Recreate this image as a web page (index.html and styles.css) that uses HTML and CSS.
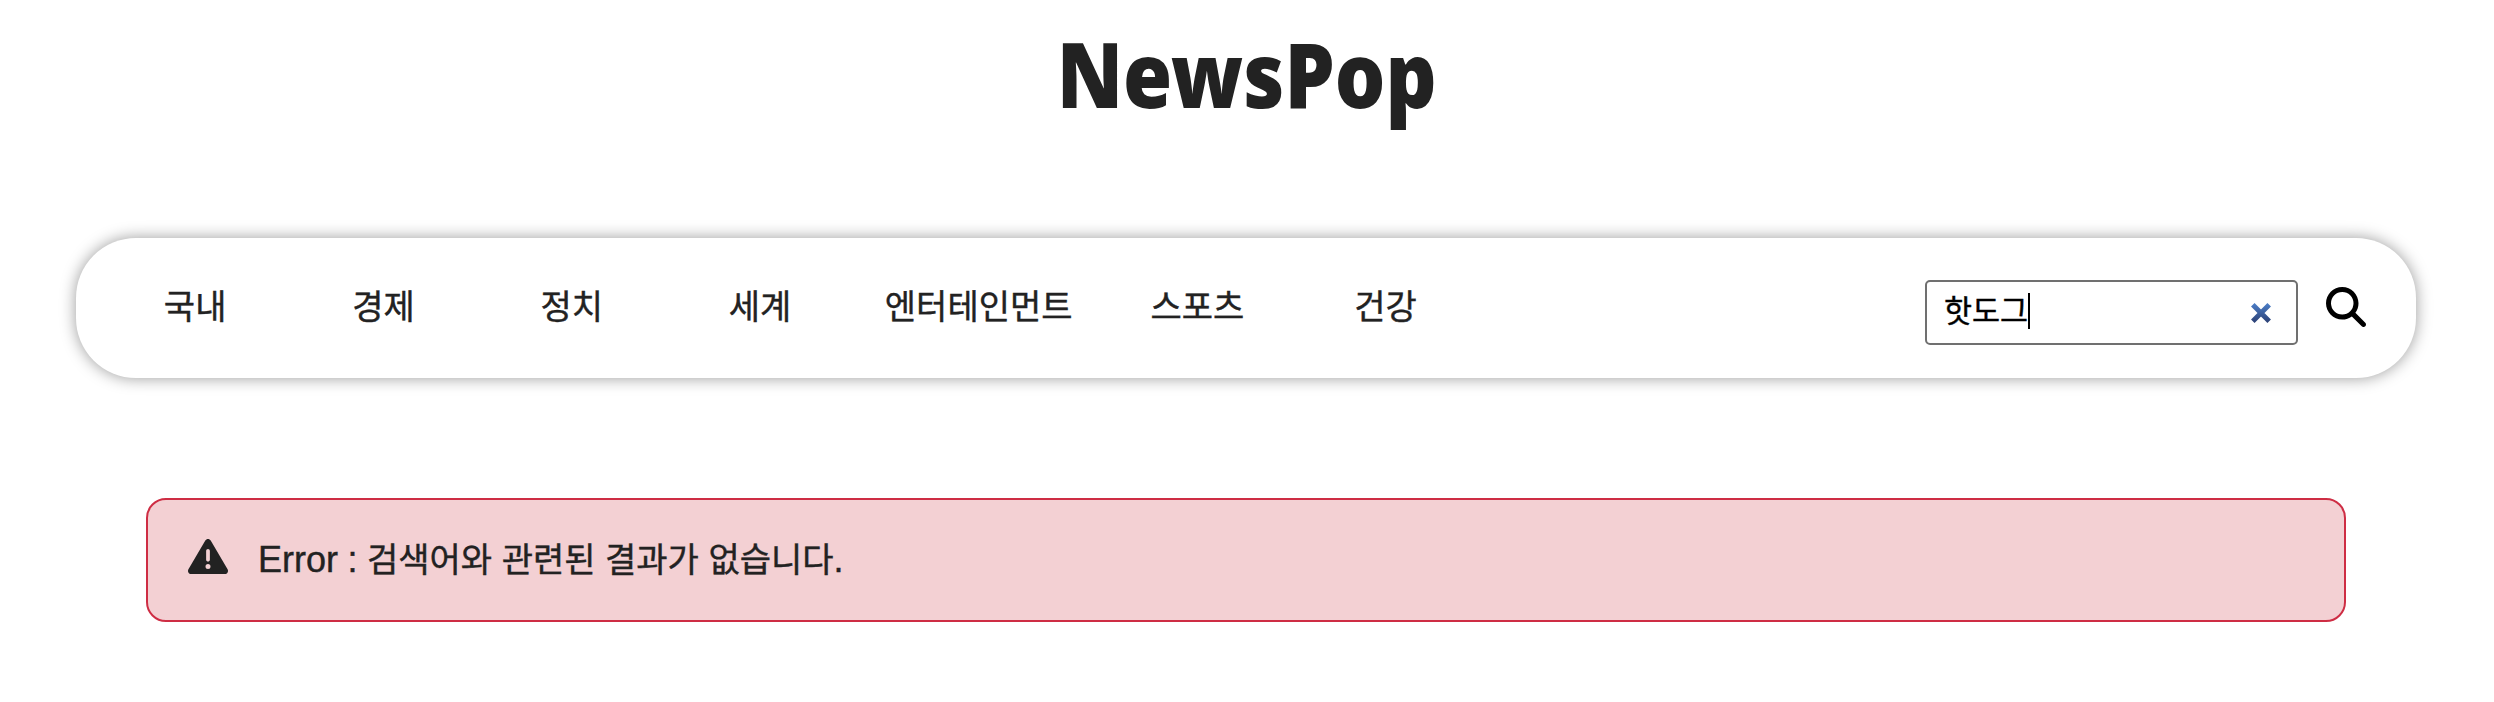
FILE: index.html
```html
<!DOCTYPE html>
<html lang="ko">
<head>
<meta charset="utf-8">
<title>NewsPop</title>
<link rel="stylesheet" href="styles.css">
</head>
<body>
<header class="header"><h1 class="logo">NewsPop</h1></header>
<nav class="nav">
  <ul class="menu">
    <li class="menu-item">국내</li>
    <li class="menu-item">경제</li>
    <li class="menu-item">정치</li>
    <li class="menu-item">세계</li>
    <li class="menu-item menu-item-wide">엔터테인먼트</li>
    <li class="menu-item">스포츠</li>
    <li class="menu-item">건강</li>
  </ul>
  <div class="search">
    <div class="search-field">
      <span class="search-text">핫도그</span><span class="caret"></span>
      <svg class="clear" viewBox="0 0 20 20">
        <defs><linearGradient id="blue" x1="0" y1="0" x2="0" y2="20" gradientUnits="userSpaceOnUse"><stop offset="0" stop-color="#4c7fc9"/><stop offset="1" stop-color="#2b3f73"/></linearGradient></defs>
        <path d="M1.800 1.800 18.200 18.200M18.200 1.800 1.800 18.200" stroke="url(#blue)" stroke-width="5" fill="none"/>
      </svg>
    </div>
    <svg class="search-icon" viewBox="0 0 512 512"><path d="M416 208c0 45.900-14.900 88.300-40 122.700L502.600 457.400c12.500 12.500 12.500 32.800 0 45.300s-32.800 12.500-45.300 0L330.700 376c-34.400 25.200-76.800 40-122.700 40C93.100 416 0 322.900 0 208S93.100 0 208 0S416 93.100 416 208zM208 352a144 144 0 1 0 0-288 144 144 0 1 0 0 288z"/></svg>
  </div>
</nav>
<main class="content">
  <div class="alert">
    <svg class="alert-icon" viewBox="0 32 512 448"><path d="M256 32c14.200 0 27.300 7.500 34.500 19.800l216 368c7.300 12.400 7.300 27.700 .2 40.100S486.300 480 472 480H40c-14.300 0-27.600-7.700-34.700-20.100s-7-27.800 .2-40.100l216-368C228.700 39.500 241.800 32 256 32zm0 128c-13.300 0-24 10.700-24 24V296c0 13.300 10.700 24 24 24s24-10.700 24-24V184c0-13.300-10.700-24-24-24zm32 224a32 32 0 1 0 -64 0 32 32 0 1 0 64 0z"/></svg>
    <p class="alert-text">Error : <span class="ko">검색어와</span> <span class="ko">관련된</span> <span class="ko">결과가</span> <span class="ko">없습니다</span>.</p>
  </div>
</main>
</body>
</html>
```
FILE: styles.css
```css
* { box-sizing: border-box; }
body {
  margin: 0;
  background: #fff;
  color: #222;
  font-family: "Liberation Sans", "Noto Sans CJK KR", sans-serif;
}
.header { height: 238px; padding-top: 13px; display: flex; justify-content: center; align-items: flex-start; }
.logo {
  margin: 0;
  font: 900 90px/120px "Noto Sans", sans-serif;
  transform: scaleX(.885);
}
.nav {
  height: 140px;
  margin: 0 78px 0 76px;
  padding: 0 50px 0 25px;
  border-radius: 60px;
  box-shadow: 0 0 16px rgba(0, 0, 0, .4);
  display: flex;
  justify-content: space-between;
}
.menu {
  margin: 0;
  padding: 42px 0 0;
  list-style: none;
  display: flex;
  font: 400 34px/50px "Noto Sans CJK KR", sans-serif;
  -webkit-text-stroke: .4px #222;
}
.menu-item { width: 188.300px; text-align: center; }
.menu-item-wide { width: 249px; }
.search { display: flex; align-items: flex-start; padding-top: 42px; gap: 28px; }
.search-field {
  width: 373px;
  height: 65px;
  border: 2px solid #707070;
  border-radius: 5px;
  padding: 0 25px 0 17px;
  display: flex;
  align-items: flex-start;
  color: #000;
}
.search-text { font: 400 30.500px/44px "Noto Sans CJK KR", sans-serif; padding-top: 5px; -webkit-text-stroke: .4px #000; }
.caret { width: 2px; height: 36px; margin-top: 11px; background: #000; }
.clear { width: 20px; height: 20px; margin: 21px 0 0 auto; }
.search-icon { width: 40px; height: 40px; margin-top: 7px; fill: #000; }
.content { padding: 120px 148px 0 146px; }
.alert {
  height: 124px;
  border: 2px solid #ce2d44;
  border-radius: 20px;
  background: #f3d0d3;
  padding: 0 40px;
  display: flex;
  align-items: flex-start;
}
.alert-icon { width: 40px; height: 35px; margin-top: 39px; fill: #222; }
.alert-text { margin: 35px 0 0 30px; font-size: 36px; line-height: 50px; white-space: nowrap; word-spacing: -.5px; -webkit-text-stroke: .4px #222; }
.ko { font-family: "Noto Sans CJK KR", sans-serif; font-size: 34px; line-height: 1; }
```
